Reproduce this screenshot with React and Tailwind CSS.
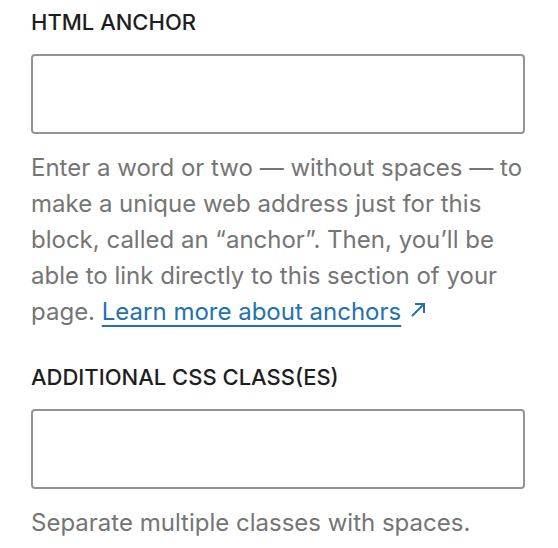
import React from 'react';

// Block inspector "Advanced" fields: anchor + extra CSS classes
const Field = ({ label, children }) => (
  <div>
    <label className="block text-[22px] leading-[31px] font-medium uppercase text-[#1e1e1e] mb-4">
      {label}
    </label>
    <input
      type="text"
      className="block w-full h-[80px] border-2 border-[#949494] rounded-[4px] bg-white px-4 outline-none"
    />
    <p className="mt-4 text-[24px] leading-[36px] text-[#757575]">{children}</p>
  </div>
);

const App = () => {
  return (
    <div
      className="w-[558px] h-[548px] bg-white pl-[31px] pr-[33px] pt-[7px] flex flex-col gap-8 overflow-hidden"
      style={{ fontFamily: 'Inter, "Noto Sans", sans-serif' }}
    >
      <Field label="HTML anchor">
        Enter a word or two — without spaces — to make a unique web address just for this block, called an
        “anchor”. Then, you’ll be able to link directly to this section of your page.{' '}
        <a href="#" className="text-[#2271b1] underline underline-offset-[5px] decoration-2">
          Learn more about anchors
        </a>
        <svg className="inline-block ml-[8px] -mt-[6px] align-middle" width="18" height="18" viewBox="0 0 18 18">
          <path d="M3 15 L15 3 M6 3 H15 V12" fill="none" stroke="#2271b1" strokeWidth="2" />
        </svg>
      </Field>
      <Field label="Additional CSS class(es)">Separate multiple classes with spaces.</Field>
    </div>
  );
};

export default App;
